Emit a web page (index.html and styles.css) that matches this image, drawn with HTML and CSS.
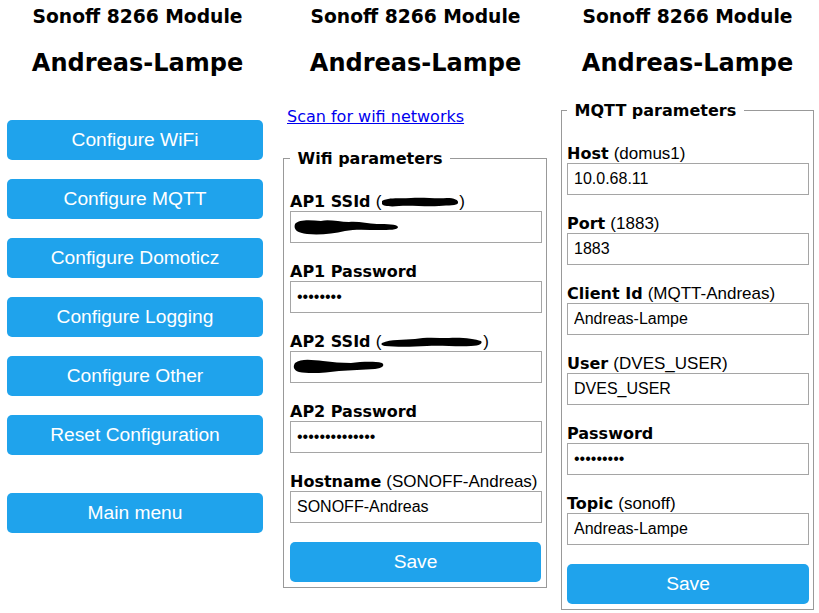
FILE: index.html
```html
<!DOCTYPE html>
<html lang="en">
<head>
  <meta charset="UTF-8">
  <meta name="viewport" content="width=device-width, initial-scale=1.0">
  <title>Sonoff 8266 Module</title>
  <link rel="stylesheet" href="styles.css">
</head>
<body>
  <div class="page">
    <!-- main menu -->
    <section class="col col-menu">
      <h3>Sonoff 8266 Module</h3>
      <h2>Andreas-Lampe</h2>
      <div class="menu">
        <button>Configure WiFi</button>
        <button>Configure MQTT</button>
        <button>Configure Domoticz</button>
        <button>Configure Logging</button>
        <button>Configure Other</button>
        <button>Reset Configuration</button>
        <button class="main-menu">Main menu</button>
      </div>
    </section>

    <!-- wifi form -->
    <section class="col col-wifi">
      <h3>Sonoff 8266 Module</h3>
      <h2>Andreas-Lampe</h2>
      <a class="scan" href="#">Scan for wifi networks</a>
      <fieldset>
        <legend>&nbsp;Wifi parameters&nbsp;</legend>
        <div class="field">
          <label><b>AP1 SSId</b> <span class="hint">(<svg class="redact" width="78" height="12" viewBox="0 0 78 12"><path d="M1 5 C8 1 20 3 30 2 C42 1 55 3 66 2 C73 2 78 4 77 7 C76 10 68 9 58 10 C45 11 30 9 18 10 C9 11 2 10 1 8 Z"/></svg>)</span></label>
          <div class="input"><svg class="redact" width="106" height="18" viewBox="0 0 106 18"><path d="M2 6 C6 1 18 2 28 3 C36 1 46 4 56 4 C66 3 74 6 84 6 C94 6 104 6 105 9 C105 12 96 12 86 12 C74 12 62 11 52 13 C40 16 26 17 14 16 C5 15 0 12 2 6 Z"/></svg></div>
        </div>
        <div class="field">
          <label><b>AP1 Password</b></label>
          <input type="password" value="12345678">
        </div>
        <div class="field">
          <label><b>AP2 SSId</b> <span class="hint">(<svg class="redact" width="102" height="12" viewBox="0 0 102 12"><path d="M1 7 C10 3 22 4 34 3 C44 1 56 2 68 2 C80 1 94 3 100 5 C102 7 99 10 90 10 C76 11 60 9 46 10 C30 11 14 11 4 10 C0 9 0 8 1 7 Z"/></svg>)</span></label>
          <div class="input"><svg class="redact" width="92" height="17" viewBox="0 0 92 17"><path d="M2 5 C8 0 20 2 30 3 C40 4 48 5 58 5 C68 4 80 3 89 5 C92 7 90 10 82 11 C70 12 58 12 46 13 C32 15 16 16 6 14 C0 12 0 8 2 5 Z"/></svg></div>
        </div>
        <div class="field">
          <label><b>AP2 Password</b></label>
          <input type="password" value="12345678901234">
        </div>
        <div class="field">
          <label><b>Hostname</b> <span class="hint">(SONOFF-Andreas)</span></label>
          <input type="text" value="SONOFF-Andreas">
        </div>
        <button class="save">Save</button>
      </fieldset>
    </section>

    <!-- mqtt form -->
    <section class="col col-mqtt">
      <h3>Sonoff 8266 Module</h3>
      <h2>Andreas-Lampe</h2>
      <fieldset>
        <legend>&nbsp;MQTT parameters&nbsp;</legend>
        <div class="field">
          <label><b>Host</b> <span class="hint">(domus1)</span></label>
          <input type="text" value="10.0.68.11">
        </div>
        <div class="field">
          <label><b>Port</b> <span class="hint">(1883)</span></label>
          <input type="text" value="1883">
        </div>
        <div class="field">
          <label><b>Client Id</b> <span class="hint">(MQTT-Andreas)</span></label>
          <input type="text" value="Andreas-Lampe">
        </div>
        <div class="field">
          <label><b>User</b> <span class="hint">(DVES_USER)</span></label>
          <input type="text" value="DVES_USER">
        </div>
        <div class="field">
          <label><b>Password</b></label>
          <input type="password" value="123456789">
        </div>
        <div class="field">
          <label><b>Topic</b> <span class="hint">(sonoff)</span></label>
          <input type="text" value="Andreas-Lampe">
        </div>
        <button class="save">Save</button>
      </fieldset>
    </section>
  </div>
</body>
</html>
```

FILE: styles.css
```css
body {
  margin: 0;
  font-family: "DejaVu Sans", Verdana, sans-serif;
  color: #000;
  background: #fff;
}
.page {
  display: flex;
  align-items: flex-start;
}
.col {
  flex: none;
  display: flex;
  flex-direction: column;
  align-items: flex-start;
}
.col-menu {
  width: 275px;
}
.col-wifi {
  width: 281px;
}
.col-mqtt {
  width: 263px;
}
h3 {
  width: 100%;
  margin: 5.5px 0 0;
  font-size: 18.72px;
  line-height: 22px;
  text-align: center;
}
h2 {
  width: 100%;
  margin: 21.7px 0 0;
  font-size: 24px;
  line-height: 28px;
  text-align: center;
}
button {
  border: 0;
  border-radius: 5px;
  background-color: #1fa3ec;
  color: #fff;
  font-family: "Liberation Sans", Arial, sans-serif;
  font-size: 19.2px;
  height: 40px;
  padding: 0;
  cursor: pointer;
}
button:hover {
  background-color: #006cba;
}
.menu {
  margin: 43px 0 0 7px;
  display: flex;
  flex-direction: column;
  gap: 19px;
}
.menu button {
  width: 256px;
}
.menu .main-menu {
  margin-top: 19px;
}
.scan {
  display: block;
  margin: 30px 0 0 12px;
  font-size: 16px;
  line-height: 19px;
  color: #0000ee;
}
fieldset {
  box-sizing: border-box;
  margin: 0;
  padding: 5px 4px 5px 6px;
  border: 1px solid #999;
}
.col-wifi fieldset {
  width: 264px;
  margin: 23px 0 0 8px;
}
.col-mqtt fieldset {
  width: 253px;
  margin: 23.5px 0 0 5px;
  padding-left: 5px;
}
legend {
  padding: 0 2px;
  font-weight: bold;
  font-size: 16px;
  line-height: 19px;
}
.field {
  margin-top: 17px;
}
.field label {
  display: block;
  padding-top: 2px;
  font-size: 16px;
  line-height: 19px;
  white-space: nowrap;
}
.hint {
  font-family: "Liberation Sans", Arial, sans-serif;
  font-size: 17px;
}
.redact {
  vertical-align: -1px;
  fill: #000;
}
input, .input {
  display: block;
  box-sizing: border-box;
  width: 100%;
  height: 32px;
  margin: 0;
  padding: 0 6px;
  border: 1px solid #a5a5a5;
  font-family: "Liberation Sans", Arial, sans-serif;
  font-size: 16px;
  color: #000;
  background: #fff;
}
.input {
  padding: 6px 2px 0;
}
.input .redact {
  vertical-align: top;
}
.save {
  display: block;
  width: 100%;
  margin-top: 19px;
}
.col-wifi .save {
  width: 251px;
}
```
